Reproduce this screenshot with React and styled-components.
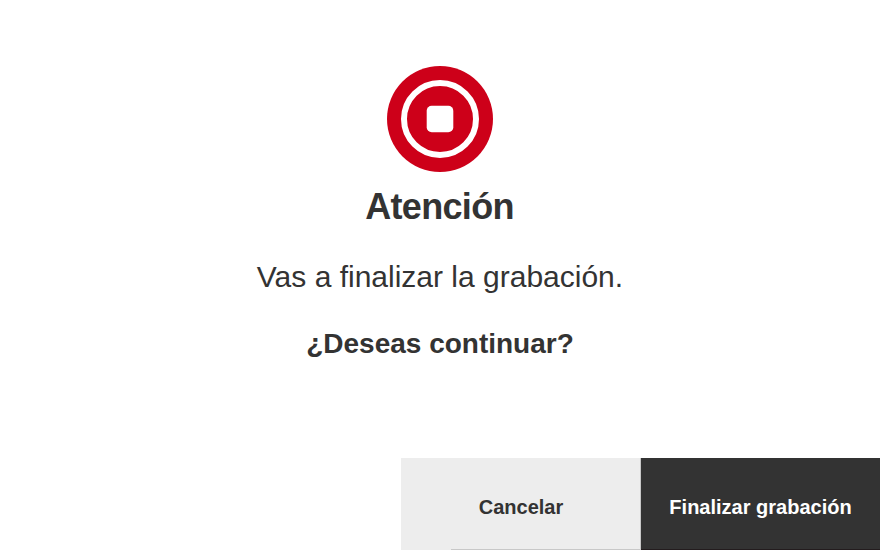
import React from "react";
import styled, { createGlobalStyle } from "styled-components";

const GlobalStyle = createGlobalStyle`
  * { box-sizing: border-box; }
  body { margin: 0; background: #fff; }
`;

const Dialog = styled.main`
  width: 880px;
  height: 550px;
  display: flex;
  flex-direction: column;
  overflow: hidden;
  color: #333;
  background: #fff;
  font-family: "Liberation Sans", Arial, sans-serif;
`;

const Message = styled.section`
  flex: 1;
  display: flex;
  flex-direction: column;
  align-items: center;
  padding-top: 66px;
  white-space: nowrap;
`;

const StopIcon = styled.svg`
  display: block;
  width: 106px;
  height: 106px;
`;

const Title = styled.h1`
  margin: 14px 0 0;
  padding-right: 1px;
  font-size: 36px;
  line-height: 42px;
  font-weight: 700;
  letter-spacing: -0.68px;
`;

const Description = styled.p`
  margin: 32px 0 0;
  font-size: 30px;
  line-height: 34px;
`;

const Question = styled.p`
  margin: 34px 0 0;
  font-size: 28px;
  line-height: 32px;
  font-weight: 700;
`;

const Actions = styled.footer`
  display: flex;
  justify-content: flex-end;
  height: 92px;
`;

const Action = styled.button`
  width: 240px;
  padding: 7px 0 0 1px;
  border: 0;
  border-right: 1px solid #c8c8c8;
  color: #333;
  background:
    linear-gradient(#c8c8c8, #c8c8c8) right bottom / 189px 1px no-repeat,
    #ededed;
  font: 700 20px "Liberation Sans", Arial, sans-serif;
  white-space: nowrap;
`;

const PrimaryAction = styled(Action)`
  width: 239px;
  padding-left: 0;
  border-right: 0;
  color: #fff;
  background: linear-gradient(#231c1e, #231c1e) left bottom / 100% 1px no-repeat, #333;
`;

export default function App() {
  return (
    <>
      <GlobalStyle />
      <Dialog>
        <Message>
          <StopIcon viewBox="0 0 106 106" aria-hidden="true">
            <circle cx="53" cy="53" r="53" fill="#cd0019" />
            <circle cx="53" cy="53" r="36" fill="none" stroke="#fff" strokeWidth="6" />
            <rect x="39.7" y="39.7" width="26.6" height="26.6" rx="5" fill="#fff" />
          </StopIcon>
          <Title>Atención</Title>
          <Description>Vas a finalizar la grabación.</Description>
          <Question>¿Deseas continuar?</Question>
        </Message>
        <Actions>
          <Action>Cancelar</Action>
          <PrimaryAction>Finalizar grabación</PrimaryAction>
        </Actions>
      </Dialog>
    </>
  );
}
